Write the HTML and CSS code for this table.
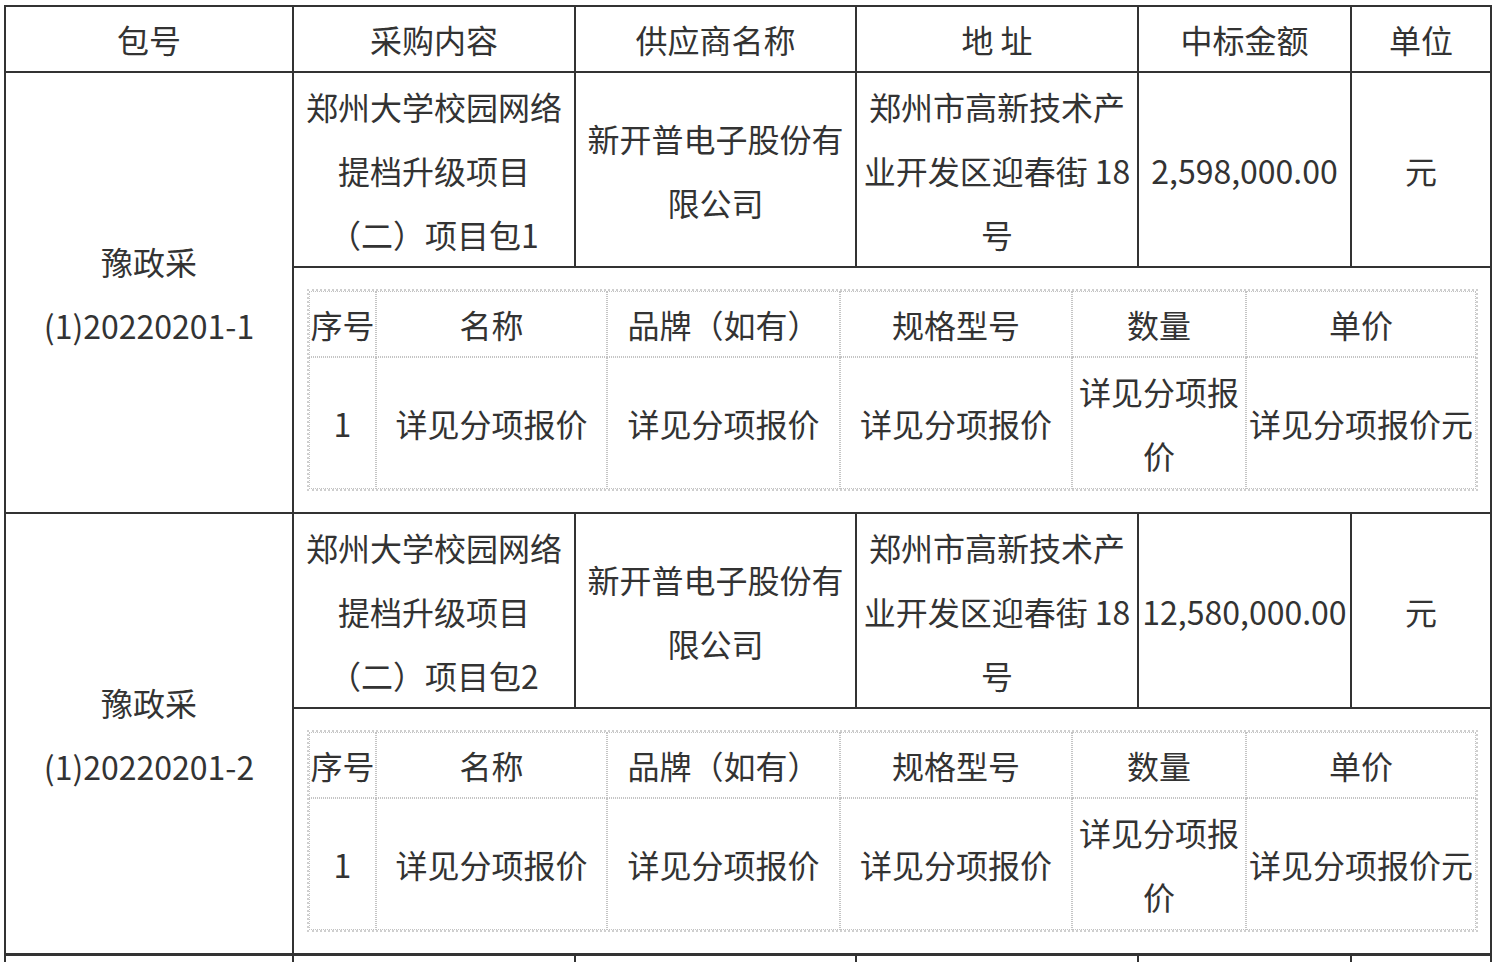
FILE: index.html
```html
<!DOCTYPE html>
<html lang="zh-CN">
<head>
<meta charset="utf-8">
<title>中标结果</title>
<link rel="stylesheet" href="styles.css">
</head>
<body>
<div class="wrap">
<table class="main">
  <colgroup>
    <col class="c-pkg"><col class="c-content"><col class="c-supplier"><col class="c-addr"><col class="c-amount"><col class="c-unit">
  </colgroup>
  <thead>
    <tr>
      <th>包号</th>
      <th>采购内容</th>
      <th>供应商名称</th>
      <th>地&nbsp;址</th>
      <th>中标金额</th>
      <th>单位</th>
    </tr>
  </thead>
  <tbody>
    <tr class="info">
      <td rowspan="2">豫政采(1)20220201-1</td>
      <td>郑州大学校园网络提档升级项目（二）项目包1</td>
      <td>新开普电子股份有限公司</td>
      <td>郑州市高新技术产业开发区迎春街 18号</td>
      <td>2,598,000.00</td>
      <td>元</td>
    </tr>
    <tr>
      <td colspan="5" class="sub-cell">
        <table class="sub">
          <colgroup>
            <col class="s-no"><col class="s-name"><col class="s-brand"><col class="s-spec"><col class="s-qty"><col class="s-price">
          </colgroup>
          <tr class="sub-head">
            <td>序号</td><td>名称</td><td>品牌（如有）</td><td>规格型号</td><td>数量</td><td>单价</td>
          </tr>
          <tr class="sub-body">
            <td>1</td><td>详见分项报价</td><td>详见分项报价</td><td>详见分项报价</td><td>详见分项报价</td><td>详见分项报价元</td>
          </tr>
        </table>
      </td>
    </tr>
    <tr class="info">
      <td rowspan="2">豫政采(1)20220201-2</td>
      <td>郑州大学校园网络提档升级项目（二）项目包2</td>
      <td>新开普电子股份有限公司</td>
      <td>郑州市高新技术产业开发区迎春街 18号</td>
      <td>12,580,000.00</td>
      <td>元</td>
    </tr>
    <tr>
      <td colspan="5" class="sub-cell">
        <table class="sub">
          <colgroup>
            <col class="s-no"><col class="s-name"><col class="s-brand"><col class="s-spec"><col class="s-qty"><col class="s-price">
          </colgroup>
          <tr class="sub-head">
            <td>序号</td><td>名称</td><td>品牌（如有）</td><td>规格型号</td><td>数量</td><td>单价</td>
          </tr>
          <tr class="sub-body">
            <td>1</td><td>详见分项报价</td><td>详见分项报价</td><td>详见分项报价</td><td>详见分项报价</td><td>详见分项报价元</td>
          </tr>
        </table>
      </td>
    </tr>
    <tr class="info next">
      <td>&nbsp;</td><td>&nbsp;</td><td>&nbsp;</td><td>&nbsp;</td><td>&nbsp;</td><td>&nbsp;</td>
    </tr>
  </tbody>
</table>
</div>
</body>
</html>
```
FILE: styles.css
```css
html, body {
  margin: 0;
  padding: 0;
  background: #ffffff;
}

body {
  font-family: "Noto Sans CJK SC", "Noto Sans", sans-serif;
  color: #333333;
  font-size: 32px;
  line-height: 64px;
  text-spacing-trim: space-all;
}

.wrap {
  padding: 5px 0 0 4px;
}

.main {
  border-collapse: collapse;
  table-layout: fixed;
  width: 1486px;
}

.main > colgroup > .c-pkg { width: 288px; }
.main > colgroup > .c-content { width: 282px; }
.main > colgroup > .c-supplier { width: 281px; }
.main > colgroup > .c-addr { width: 282px; }
.main > colgroup > .c-amount { width: 213px; }
.main > colgroup > .c-unit { width: 140px; }

.main > thead > tr > th,
.main > tbody > tr > td {
  border: 2px solid #333333;
  padding: 0;
  text-align: center;
  vertical-align: middle;
  font-weight: normal;
  word-break: normal;
  overflow: hidden;
}

.main > tbody > tr.info > td {
  padding-top: 1px;
}

.main > tbody > tr.next > td {
  border-top-width: 3px;
}

.main > tbody > tr > td.sub-cell {
  padding: 0;
}

.sub {
  border-collapse: separate;
  border-spacing: 0;
  table-layout: fixed;
  width: 1171px;
  margin: 21px 13px 21px 13px;
  border: 2px dotted #cfcfcf;
}

.sub .s-no { width: 67px; }
.sub .s-name { width: 231px; }
.sub .s-brand { width: 233px; }
.sub .s-spec { width: 232px; }
.sub .s-qty { width: 174px; }
.sub .s-price { width: 230px; }

.sub td {
  border: 1px dotted #c4c4c4;
  padding: 0;
  text-align: center;
  vertical-align: middle;
}

.sub .sub-body td {
  padding: 1px 0;
}
```
